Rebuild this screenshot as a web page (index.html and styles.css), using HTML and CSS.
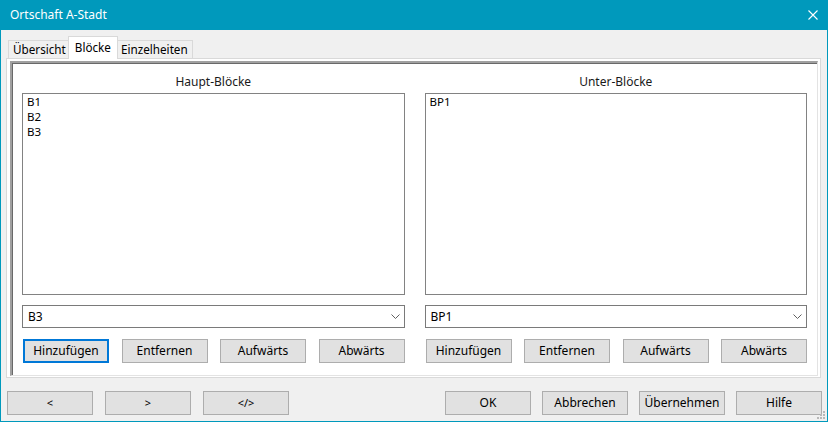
FILE: index.html
```html
<!DOCTYPE html>
<html lang="de">
<head>
    <meta charset="UTF-8">
    <title>Ortschaft A-Stadt</title>
    <link rel="stylesheet" href="styles.css">
</head>
<body>
    <div class="window">
        <div class="titlebar">
            <div class="title">Ortschaft A-Stadt</div>
            <svg class="close" width="10" height="10" viewBox="0 0 10 10">
                <path d="M0.5 0.5 L9.5 9.5 M9.5 0.5 L0.5 9.5" stroke="#fff" stroke-width="1.1" fill="none"/>
            </svg>
        </div>

        <div class="tabs">
            <div class="tab">Übersicht</div>
            <div class="tab active">Blöcke</div>
            <div class="tab">Einzelheiten</div>
        </div>

        <div class="tab-page">
            <div class="frame">
                <div class="column">
                    <div class="column-title">Haupt-Blöcke</div>
                    <div class="listbox">
                        <div class="list-item">B1</div>
                        <div class="list-item">B2</div>
                        <div class="list-item">B3</div>
                    </div>
                    <div class="combo">
                        <span>B3</span>
                        <svg class="chevron" width="9" height="5" viewBox="0 0 9 5">
                            <path d="M0.5 0.5 L4.5 4.5 L8.5 0.5" stroke="#606060" stroke-width="1" fill="none"/>
                        </svg>
                    </div>
                    <div class="button-row">
                        <div class="btn focused">Hinzufügen</div>
                        <div class="btn">Entfernen</div>
                        <div class="btn">Aufwärts</div>
                        <div class="btn">Abwärts</div>
                    </div>
                </div>

                <div class="column">
                    <div class="column-title">Unter-Blöcke</div>
                    <div class="listbox">
                        <div class="list-item">BP1</div>
                    </div>
                    <div class="combo">
                        <span>BP1</span>
                        <svg class="chevron" width="9" height="5" viewBox="0 0 9 5">
                            <path d="M0.5 0.5 L4.5 4.5 L8.5 0.5" stroke="#606060" stroke-width="1" fill="none"/>
                        </svg>
                    </div>
                    <div class="button-row">
                        <div class="btn">Hinzufügen</div>
                        <div class="btn">Entfernen</div>
                        <div class="btn">Aufwärts</div>
                        <div class="btn">Abwärts</div>
                    </div>
                </div>
            </div>
        </div>

        <div class="footer">
            <div class="footer-group">
                <div class="btn small-glyph">&lt;</div>
                <div class="btn small-glyph">&gt;</div>
                <div class="btn small-glyph">&lt;/&gt;</div>
            </div>
            <div class="footer-group right">
                <div class="btn">OK</div>
                <div class="btn">Abbrechen</div>
                <div class="btn">Übernehmen</div>
                <div class="btn">Hilfe</div>
            </div>
        </div>

        <svg class="grip" width="8" height="8" viewBox="0 0 8 8">
            <rect x="6" y="0" width="2" height="2" fill="#b8b8b8"/>
            <rect x="3" y="3" width="2" height="2" fill="#b8b8b8"/>
            <rect x="6" y="3" width="2" height="2" fill="#b8b8b8"/>
            <rect x="0" y="6" width="2" height="2" fill="#b8b8b8"/>
            <rect x="3" y="6" width="2" height="2" fill="#b8b8b8"/>
            <rect x="6" y="6" width="2" height="2" fill="#b8b8b8"/>
        </svg>
    </div>
</body>
</html>
```

FILE: styles.css
```css
* {
    margin: 0;
    padding: 0;
    box-sizing: border-box;
}

body {
    width: 828px;
    height: 422px;
    overflow: hidden;
    font-family: "Noto Sans", "Open Sans", sans-serif;
    font-size: 12px;
    color: #000;
    background-color: #f0f0f0;
}

.window {
    width: 828px;
    height: 422px;
    border: 1px solid #0099bc;
    border-top: none;
    background-color: #f0f0f0;
    position: relative;
}

.titlebar {
    height: 30px;
    margin: 0 -1px;
    padding: 0 10px;
    background-color: #0099bc;
    color: #fff;
    display: flex;
    justify-content: space-between;
    align-items: center;
}

.title {
    line-height: 16px;
    margin-top: -1px;
}

/* pestañas */
.tabs {
    height: 28px;
    padding-left: 7px;
    display: flex;
    align-items: flex-end;
    font-size: 11.7px;
}

.tab {
    height: 18px;
    padding: 0 4px;
    line-height: 16px;
    border: 1px solid #d9d9d9;
    border-bottom: none;
    background-color: #f0f0f0;
    margin-right: -1px;
}

.tab.active {
    height: 23px;
    padding: 2px 6px 0;
    margin: 0 -2px -1px -2px;
    background-color: #fff;
    position: relative;
    z-index: 1;
}

.tab-page {
    height: 320px;
    margin: 0 6px 0 5px;
    padding: 2px 2px 2px 3px;
    border: 1px solid #d9d9d9;
    background-color: #fff;
}

.frame {
    height: 315px;
    display: flex;
    gap: 20px;
    padding: 11px 10px;
    border-top: 2px solid #a0a0a0;
    border-left: 2px solid #a0a0a0;
    border-right: 1px solid #e3e3e3;
    border-bottom: 1px solid #e3e3e3;
    box-shadow: inset 1px 1px 0 #696969;
    background-color: #fff;
}

.column {
    flex: 1;
    display: flex;
    flex-direction: column;
}

.column-title {
    text-align: center;
    line-height: 16px;
    margin-bottom: 3px;
    color: #1a1a1a;
}

.listbox {
    height: 202px;
    border: 1px solid #828282;
    padding: 0 4px;
    font-size: 11.5px;
}

.list-item {
    line-height: 15px;
}

.combo {
    height: 23px;
    margin-top: 10px;
    border: 1px solid #7a7a7a;
    padding: 0 4px 0 5px;
    display: flex;
    justify-content: space-between;
    align-items: center;
}

.button-row {
    margin-top: 11px;
    display: flex;
    justify-content: space-between;
    padding-left: 1px;
}

.btn {
    width: 86px;
    height: 24px;
    border: 1px solid #adadad;
    background-color: #e1e1e1;
    display: flex;
    justify-content: center;
    align-items: center;
    line-height: 16px;
}

.btn.focused {
    border: 2px solid #0078d7;
}

.btn.small-glyph {
    font-size: 11px;
}

.footer {
    margin-top: 13px;
    padding: 0 5px 0 6px;
    display: flex;
    justify-content: space-between;
}

.footer-group {
    display: flex;
    gap: 12px;
}

.footer-group.right {
    gap: 11px;
}

.grip {
    position: absolute;
    right: 2px;
    bottom: 2px;
}
```
